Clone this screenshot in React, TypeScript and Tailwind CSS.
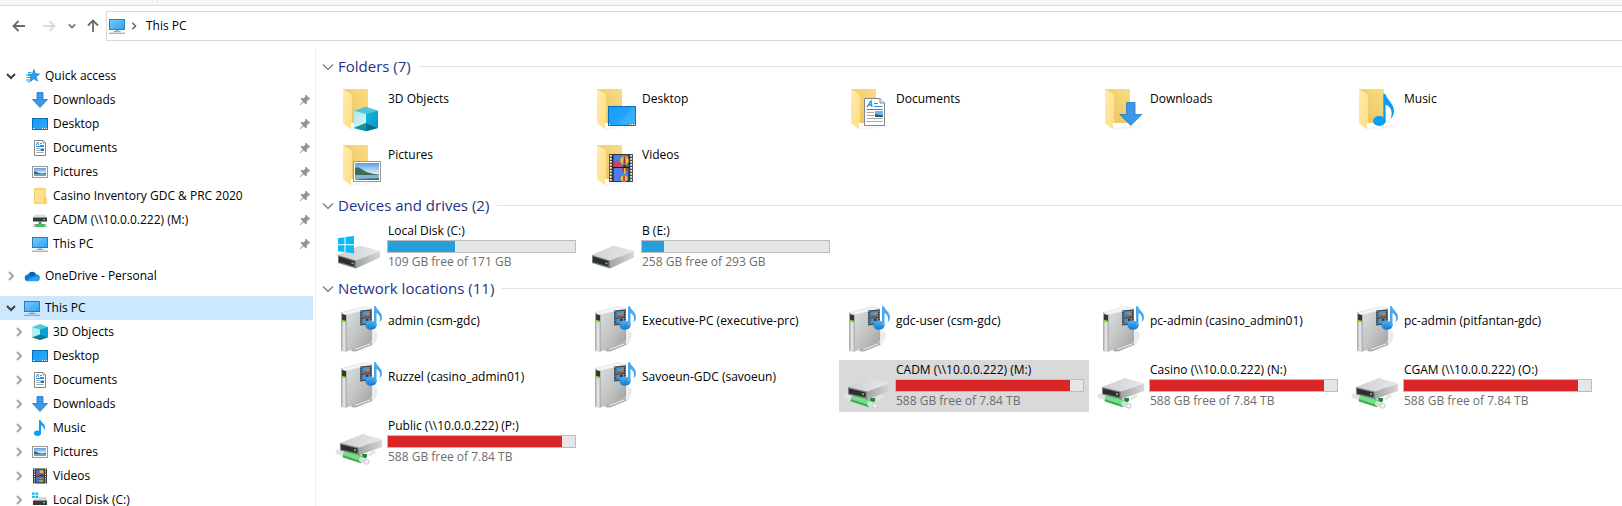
import React, { useState } from "react";

type IconProps = { className?: string };

/* ---------- glyphs ---------- */

function ChevronDown({ className }: IconProps) {
  return (
    <svg viewBox="0 0 10 10" className={className} fill="none" stroke="currentColor" strokeWidth="2">
      <path d="M1 3l4 4 4-4" />
    </svg>
  );
}

function ChevronRight({ className }: IconProps) {
  return (
    <svg viewBox="0 0 10 10" className={className} fill="none" stroke="currentColor" strokeWidth="1.8">
      <path d="M3 1l4 4-4 4" />
    </svg>
  );
}

function GroupChevron({ className }: IconProps) {
  return (
    <svg viewBox="0 0 12 12" className={className} fill="none" stroke="currentColor" strokeWidth="1.1">
      <path d="M1 3.5l5 5 5-5" />
    </svg>
  );
}

function Arrow({ className }: IconProps) {
  return (
    <svg viewBox="0 0 14 14" className={className} fill="none" stroke="currentColor" strokeWidth="1.8">
      <path d="M13 7H1.5M6.5 2l-5 5 5 5" />
    </svg>
  );
}

function Pin({ className }: IconProps) {
  return (
    <svg viewBox="0 0 12 12" className={className} fill="#8c979f">
      <path d="M7 .8L11.2 5l-.9.8-.7-.2-1.8 1.9.1 2-1 1L4.6 8.200 1.200 11.300.7 10.800 3.800 7.400 1.500 5.100l1-1 2 .1L6.400 2.400 6.200 1.600z" />
    </svg>
  );
}

/* ---------- small icons, 16 x 16 ---------- */

function PcIcon({ className }: IconProps) {
  return (
    <svg viewBox="0 0 16 16" className={className}>
      <rect x=".5" y="1.500" width="15" height="10" fill="url(#screen)" stroke="#2a7db5" />
      <path d="M6.500 12h3v1h-3z" fill="#9ab0c0" />
      <path d="M4.500 13h7v.8h-7z" fill="#7f95a5" />
      <path d="M0 14.700h16v1H0z" fill="#7d98b0" />
    </svg>
  );
}

function StarIcon({ className }: IconProps) {
  return (
    <svg viewBox="0 0 16 16" className={className}>
      <path d="M10 1.500l1.400 4.200 4.100.3-3.400 2.700 1.300 4.400-3.600-2.400-3.600 2.900.9-4.600L4 6.400l4.400-.5z" fill="#2aa3ee" stroke="#1272b8" strokeWidth=".7" />
      <path d="M4 4.500h3.500M2 7h4M2.500 9.500H7M2 12h4.500M3.500 14h2" stroke="#1b8fe0" strokeWidth=".9" />
    </svg>
  );
}

function DownloadIcon({ className }: IconProps) {
  return (
    <svg viewBox="0 0 16 16" className={className}>
      <path d="M5 .5h6v7h4.500L8 15.500.5 7.500H5z" fill="#3b97e8" stroke="#2478c4" strokeWidth=".8" />
    </svg>
  );
}

function DesktopIcon({ className }: IconProps) {
  return (
    <svg viewBox="0 0 16 16" className={className}>
      <rect x=".5" y="2.500" width="15" height="11" fill="url(#desk)" stroke="#0d6fb8" />
      <path d="M1 12.500h1.500M10 12.500h1M12 12.500h1M14 12.500h1" stroke="#fff" />
    </svg>
  );
}

function DocumentIcon({ className }: IconProps) {
  return (
    <svg viewBox="0 0 16 16" className={className}>
      <path d="M2.500.5h8.500l2.500 2.500v12.500h-11z" fill="#fff" stroke="#858585" />
      <path d="M11 .5V3h2.500" fill="none" stroke="#858585" strokeWidth=".8" />
      <path d="M4.200 5l1.500-3 1 3M8 3.500h2M8 5.500h4M4 6.500h8" stroke="#1f93dc" fill="none" />
      <path d="M4 8.500h4M4 10.500h4M4 12.500h8" stroke="#8f9aa2" strokeWidth=".8" />
      <path d="M8.500 8.500H12V11H8.500z" fill="#2f78a6" />
    </svg>
  );
}

function PictureIcon({ className }: IconProps) {
  return (
    <svg viewBox="0 0 16 16" className={className}>
      <rect x=".5" y="2.500" width="15" height="11" fill="#fff" stroke="#999" />
      <rect x="2" y="4" width="12" height="8" fill="url(#sky)" />
      <path d="M2 7c3 .6 5 2.500 8 2.500l4-.5v1.200H2z" fill="#3c6b58" />
      <path d="M2 10h12v2H2z" fill="#6aa3c4" />
    </svg>
  );
}

function FolderIcon({ className }: IconProps) {
  return (
    <svg viewBox="0 0 16 16" className={className}>
      <path d="M2.500.5h10.800v9l1.200 1v5h-12z" fill="#ffe08a" stroke="#eac65b" strokeWidth=".8" />
      <path d="M12.500 15V10l1.500-.6" fill="none" stroke="#e3bb4b" strokeWidth=".8" />
    </svg>
  );
}

function NetDriveIcon({ className }: IconProps) {
  return (
    <svg viewBox="0 0 16 16" className={className}>
      <path d="M3 2.500h10l2 3H1z" fill="#dcdee0" />
      <path d="M1 5.500h14v4H1z" fill="#33383b" />
      <path d="M11 7.500h2" stroke="#4ee36b" strokeWidth="1.200" />
      <path d="M6.500 9.500h3v2.500h-3z" fill="#3c9f4c" />
      <path d="M3 12h10v3H3z" fill="#4bb95b" />
      <path d="M1 12.500h2v2H1zM13 12.500h2v2h-2z" fill="#bfc6c2" />
    </svg>
  );
}

function CloudIcon({ className }: IconProps) {
  return (
    <svg viewBox="0 0 16 16" className={className}>
      <path d="M4 7a4.500 4.500 0 018.400-.6L9 10z" fill="#0f5fb5" />
      <path d="M3.600 13.300A3.400 3.400 0 013.500 6.600c1.200-.2 2 .1 2.800.6l4.200 2.600-6.900 3.500z" fill="#1177d4" />
      <path d="M8.800 8.800c1-1.900 2.400-2.600 4-2.300a3.300 3.300 0 013 3l-4.300 1.300z" fill="#1a8ae6" />
      <path d="M1.800 12.700L9 8.700l6.600.4c.7 2.200-.4 4.200-2.600 4.200H3.600c-.7 0-1.300-.2-1.800-.6z" fill="#27a4f0" />
    </svg>
  );
}

function CubeIcon({ className }: IconProps) {
  return (
    <svg viewBox="0 0 16 16" className={className}>
      <path d="M8 0l8 3v10l-8 3-8-3V3z" fill="#52c8dc" />
      <path d="M0 3l8 2.500V11l-8 2.500z" fill="#b5ecf0" />
      <path d="M16 3L8 5.500V11l8 2.500z" fill="#0aa3d2" />
      <path d="M8 10.500l8 3L8 16l-8-2.500z" fill="#087f96" />
    </svg>
  );
}

function MusicIcon({ className }: IconProps) {
  return (
    <svg viewBox="0 0 16 16" className={className} fill="#0f9bf2">
      <ellipse cx="5.500" cy="13.200" rx="3.500" ry="2.700" />
      <path d="M7 0h1.500c.4 2.500 4.500 3.500 4.500 7.500 0 1.400-.4 2.400-1 3.300.3-3.600-1.500-4.800-3-5.600v8H7z" />
    </svg>
  );
}

function VideoIcon({ className }: IconProps) {
  return (
    <svg viewBox="0 0 16 16" className={className}>
      <path d="M1 .5h14v15H1z" fill="#2e2e2e" />
      <path d="M2.500 1v15M13.500 1v15" stroke="#e8e8e8" strokeWidth="1.200" strokeDasharray="1.300 1" />
      <path d="M4 1.500h8v6H4zM4 8.500h8v6H4z" fill="#3d74cf" />
      <path d="M4 6h4l-1 1.500H4z" fill="#cf3c5a" />
      <circle cx="9.500" cy="4" r="2" fill="#edb623" />
      <path d="M8.500 5.500h2V8h-2z" fill="#6a2d1b" />
      <circle cx="9" cy="12" r="2" fill="#d9a221" />
      <path d="M7 11h4v1H7z" fill="#c22b33" />
    </svg>
  );
}

function DiskIcon({ className }: IconProps) {
  return (
    <svg viewBox="0 0 16 16" className={className}>
      <path d="M0 .5h2.700v2.300H0zM3.500.5h2.700v2.300H3.500zM0 3.800h2.700v2.300H0zM3.500 3.800h2.700v2.300H3.500z" fill="#12b5ee" />
      <path d="M7 5h6.500L15 8.500H1l1.500-1.700H7z" fill="#d3d5d7" />
      <path d="M1 8.500h14V13H1z" fill="#35393b" />
      <path d="M11 10.700h2" stroke="#4ee36b" strokeWidth="1.200" />
    </svg>
  );
}

/* ---------- large icons, 48 x 48 ---------- */

function LargeFolder({ children }: { children: React.ReactNode }) {
  return (
    <svg viewBox="0 0 48 48" className="size-12">
      <path d="M17 44.500l5-1.500 25-2-3 2-26 3z" fill="#000" opacity=".04" />
      <path d="M8 5h25v34H12z" fill="url(#folderBack)" />
      <path d="M8 5l7.500 4.600c1 .6 1.500 1.400 1.500 2.600v27h-1.500l1 6.300L8 39.500z" fill="url(#folderFront)" />
      {children}
    </svg>
  );
}

function Folder3D() {
  return (
    <LargeFolder>
      <path d="M31 22.700l12 4v17.300l-12 3.200-12-3.200V26.700z" fill="#4cc5d8" />
      <path d="M19 26.700L31 30v9l-12 4.500z" fill="url(#cubeLeft)" />
      <path d="M43 26.700L31 30v9l12 4.500z" fill="url(#cubeRight)" />
      <path d="M31 39v8.200L19 44z" fill="#0d94a8" />
      <path d="M31 39v8.200L43 44z" fill="#066f8f" />
    </LargeFolder>
  );
}

function FolderDesktop() {
  return (
    <LargeFolder>
      <rect x="19.500" y="22.500" width="27" height="19" fill="url(#desk)" stroke="#0d6fb8" />
      <path d="M20 40.500h1M41 40.500h1M43 40.500h1M45 40.500h1" stroke="#fff" />
      <path d="M29 40L44 23h2.500v17z" fill="#fff" opacity=".09" />
    </LargeFolder>
  );
}

function FolderDocuments() {
  return (
    <LargeFolder>
      <path d="M21.500 14.500h15.500l4.500 4.500v22.500h-20z" fill="#fff" stroke="#858585" />
      <path d="M37 14.500V19h4.500" fill="#eee" stroke="#858585" />
      <path d="M24 23l4-6 1 6M25.500 21h3.500" fill="none" stroke="#1f93dc" strokeWidth="1.300" />
      <path d="M31 19.500h4M31 22.500h8.500M23.500 25.500h16" stroke="#1f93dc" />
      <path d="M23.500 28.500h7.500M23.500 31.500h7.500M23.500 34.500h16M23.500 37.500h16" stroke="#a9a9b2" />
      <path d="M32 27h8v6h-8z" fill="#74b3ea" />
      <path d="M32 30l8 1.500V33h-8z" fill="#2b5d6e" />
    </LargeFolder>
  );
}

function FolderDownloads() {
  return (
    <LargeFolder>
      <path d="M29.500 18.500h8.500v12h6.800L33.800 41.500 22.800 30.500h6.700z" fill="#3b97e8" stroke="#2478c4" strokeWidth=".8" />
    </LargeFolder>
  );
}

function FolderMusic() {
  return (
    <LargeFolder>
      <ellipse cx="28.300" cy="37" rx="6.300" ry="5" fill="#0a9df5" />
      <path d="M32.300 10h2.200c1 5.500 8.500 9.500 8.500 17 0 2.800-1 5-2.400 7.200l-.6-.7c2-6-.5-11-5.400-13V38h-2.300z" fill="#0a9df5" />
    </LargeFolder>
  );
}

function FolderPictures() {
  return (
    <LargeFolder>
      <rect x="18.500" y="21.500" width="27" height="20" fill="#fff" stroke="#999" />
      <rect x="20" y="23" width="24" height="17" fill="url(#sky)" />
      <path d="M20 28c3-2 6 1 9 2.500 3 2 8 3.500 15 4v.8H20z" fill="#3d6d5c" />
      <path d="M20 35h24v5H20z" fill="#7fb5d6" />
      <path d="M20 40c6-1.500 12-1.500 24-2v2z" fill="#3f735c" />
    </LargeFolder>
  );
}

function FolderVideos() {
  return (
    <LargeFolder>
      <path d="M20 14h24v28H20z" fill="#4a4a4a" />
      <path d="M21.800 15v27M42.200 15v27" stroke="#f2f2f2" strokeWidth="1.800" strokeDasharray="1.700 1.300" />
      <path d="M23.500 14.500h17v27h-17z" fill="#1c1c1c" />
      <path d="M24.500 15h15v12h-15zM24.500 28h15v13h-15z" fill="#4b7fe0" />
      <path d="M24.500 22l3-1.500 4 3 2 3.500h-9z" fill="#d8405f" />
      <path d="M34 25h5.500v2H34z" fill="#2e8b4f" />
      <circle cx="35.500" cy="20.500" r="4.200" fill="#f4c12c" />
      <path d="M34.700 16.500h1.600l.4 8h-2.400z" fill="#b8282f" />
      <path d="M34.500 25h2v2h-2z" fill="#3d2412" />
      <path d="M32.500 28h6.500l-2.300 4.500h-2z" fill="#c9352e" />
      <path d="M35 28h1.500v6H35z" fill="#f4c12c" />
      <circle cx="35" cy="38.500" r="3.300" fill="#f4c12c" />
      <path d="M34.300 35.500h1.500V41h-1.500z" fill="#b8282f" />
    </LargeFolder>
  );
}

function DiskShape() {
  return (
    <>
      <path d="M3 32l20.500-9c1-.4 2-.4 3 0L45 28 21 37.500z" fill="url(#metal)" />
      <path d="M45 28v6.500L21 45.500v-8z" fill="url(#metalSide)" />
      <path d="M3 32l18 5.500v8L3 40z" fill="#77797b" />
      <path d="M4 33.600l15.300 4.600v5.400L4 39z" fill="#2b2d2e" />
      <path d="M16.500 39.200l2 .6v1.600l-2-.6z" fill="#3bf04c" />
    </>
  );
}

function LocalDisk() {
  return (
    <svg viewBox="0 0 48 48" className="size-12">
      <DiskShape />
      <path d="M3 15.200l6.500-.9v6.900H3zM10.500 14.100L19 13v8.200h-8.500zM3 22.200h6.500v6.900L3 28.200zM10.500 22.200H19v8.200l-8.500-1.200z" fill="#0bbcf2" />
    </svg>
  );
}

function Disk() {
  return (
    <svg viewBox="0 0 48 48" className="size-12">
      <DiskShape />
    </svg>
  );
}

function NetworkDisk() {
  return (
    <svg viewBox="0 0 48 48" className="size-12">
      <path d="M27 36h5v3l-4 3z" fill="#23823a" />
      <path d="M37 33l3-.5.500 2.500-5 3-3-1z" fill="#e3e5e6" />
      <path d="M3 33.800l6 2" stroke="#dfe3e4" strokeWidth="5" strokeLinecap="round" />
      <path d="M8.500 35.800l18.500 6" stroke="#3cab52" strokeWidth="7.500" />
      <path d="M8.700 35l18.500 6" stroke="#74e087" strokeWidth="4.500" />
      <path d="M27 41.800l4.500 1.700" stroke="#dadddd" strokeWidth="5.600" strokeLinecap="round" />
      <circle cx="31.800" cy="43.800" r="2.300" fill="#f5f6f6" stroke="#b9bebf" strokeWidth=".7" />
      <path d="M5 25l21.500-8.600c1-.4 2-.4 3 0L47 21.500 24 29.500z" fill="url(#metal)" />
      <path d="M47 21.500V29L24 37.200v-7.700z" fill="url(#metalSide)" />
      <path d="M5 25l19 4.500v7.700L5 32.500z" fill="#808284" />
      <path d="M6 26.500l16.500 4v4.800L6 31.400z" fill="#2b2d2e" />
      <path d="M19 31.100l2 .5v1.700l-2-.5z" fill="#3bf04c" />
    </svg>
  );
}

function MediaServer() {
  return (
    <svg viewBox="0 0 48 48" className="size-12">
      <path d="M16 46l22-7c3-3 5-8 5-12l-6-3z" fill="#000" opacity=".08" />
      <path d="M18 42l18-6.500 1.500 3.300L21 45.500l-5-.5z" fill="#a9aaab" />
      <path d="M20 43.500l15.500-5.700" stroke="#eee" strokeWidth="1.200" />
      <path d="M6 6.500L29 .5l8 2L12 9z" fill="#f3f4f5" stroke="#d8d9db" strokeWidth=".5" />
      <path d="M12 8.700L37 2.500V35L12 45.500z" fill="url(#tower)" />
      <path d="M6 6.500l6 2.200v36.800c-2.500.6-4.500.3-6-1z" fill="url(#towerFront)" />
      <path d="M7 8l4 1.300v6.500l-4-1z" fill="#333637" />
      <path d="M7 13.800l4 1v1.700l-4-1z" fill="#7be500" />
      <path d="M25 4.500L37 3.500V18l-12 1.500z" fill="#3b4148" />
      <path d="M26 5v14M36.300 4.500v13" stroke="#a9b3bc" strokeWidth="1" strokeDasharray="1.200 1.200" />
      <path d="M27.300 5.500l7.700-.7v6.200l-7.700.8zM27.300 12.800l7.700-.8v5l-7.700.9z" fill="#3f97d4" />
      <path d="M28 9.800l3.500-.8 3-1.500V11l-6.500.6z" fill="#a8503a" />
      <circle cx="32.500" cy="8" r="1.500" fill="#cf8626" />
      <path d="M31 12.800h2.500v2H31z" fill="#4f2620" />
      <ellipse cx="36" cy="19.300" rx="5.600" ry="4.500" fill="url(#note)" />
      <path d="M39 .3h2c.8 4 6 5.700 6 10.700 0 2-.7 3.500-1.700 4.700l-.6-.4c1.300-4-.6-7-3.200-8.300v12.500H39z" fill="#49a9ec" />
    </svg>
  );
}

function Gradients() {
  return (
    <svg className="absolute size-0" aria-hidden="true">
      <defs>
        <linearGradient id="screen" x1="0" y1="0" x2="1" y2="1">
          <stop offset="0" stopColor="#7ccbfb" />
          <stop offset="1" stopColor="#2ba2f5" />
        </linearGradient>
        <linearGradient id="desk" x1="0" y1="0" x2="1" y2="1">
          <stop offset="0" stopColor="#149cf8" />
          <stop offset="1" stopColor="#30a8fd" />
        </linearGradient>
        <linearGradient id="sky" x1="0" y1="0" x2="0" y2="1">
          <stop offset="0" stopColor="#5b9be4" />
          <stop offset=".6" stopColor="#d9ecf6" />
        </linearGradient>
        <linearGradient id="folderBack" x1="0" y1="1" x2="1" y2="0">
          <stop offset="0" stopColor="#e9c25c" />
          <stop offset="1" stopColor="#f9dc83" />
        </linearGradient>
        <linearGradient id="folderFront" x1="0" y1="0" x2="1" y2="1">
          <stop offset="0" stopColor="#ffecac" />
          <stop offset="1" stopColor="#ffdd86" />
        </linearGradient>
        <linearGradient id="cubeLeft" x1="0" y1="0" x2="1" y2="1">
          <stop offset="0" stopColor="#a9e6ec" />
          <stop offset="1" stopColor="#dff7f8" />
        </linearGradient>
        <linearGradient id="cubeRight" x1="0" y1="0" x2="1" y2="1">
          <stop offset="0" stopColor="#10bcd4" />
          <stop offset="1" stopColor="#0b8fd8" />
        </linearGradient>
        <linearGradient id="metal" x1="0" y1="0" x2="1" y2="0">
          <stop offset="0" stopColor="#cfd0d2" />
          <stop offset="1" stopColor="#e6e7ea" />
        </linearGradient>
        <linearGradient id="metalSide" x1="0" y1="0" x2="1" y2="0">
          <stop offset="0" stopColor="#a2a3a6" />
          <stop offset="1" stopColor="#d6d7d9" />
        </linearGradient>
        <linearGradient id="tower" x1="0" y1="0" x2="1" y2="1">
          <stop offset="0" stopColor="#dcdddd" />
          <stop offset=".55" stopColor="#bfc0c0" />
          <stop offset="1" stopColor="#9d9e9e" />
        </linearGradient>
        <linearGradient id="towerFront" x1="0" y1="0" x2="1" y2="0">
          <stop offset="0" stopColor="#9fa0a3" />
          <stop offset=".5" stopColor="#ecedf1" />
          <stop offset="1" stopColor="#a6a7ab" />
        </linearGradient>
        <linearGradient id="note" x1="0" y1="0" x2="0" y2="1">
          <stop offset="0" stopColor="#4fb2f2" />
          <stop offset="1" stopColor="#1178cf" />
        </linearGradient>
      </defs>
    </svg>
  );
}

/* ---------- navigation pane ---------- */

type NavEntry = { label: string; icon: React.ComponentType<IconProps> };

const quickAccess: NavEntry[] = [
  { label: "Downloads", icon: DownloadIcon },
  { label: "Desktop", icon: DesktopIcon },
  { label: "Documents", icon: DocumentIcon },
  { label: "Pictures", icon: PictureIcon },
  { label: "Casino Inventory GDC & PRC 2020", icon: FolderIcon },
  { label: "CADM (\\\\10.0.0.222) (M:)", icon: NetDriveIcon },
  { label: "This PC", icon: PcIcon },
];

const thisPc: NavEntry[] = [
  { label: "3D Objects", icon: CubeIcon },
  { label: "Desktop", icon: DesktopIcon },
  { label: "Documents", icon: DocumentIcon },
  { label: "Downloads", icon: DownloadIcon },
  { label: "Music", icon: MusicIcon },
  { label: "Pictures", icon: PictureIcon },
  { label: "Videos", icon: VideoIcon },
  { label: "Local Disk (C:)", icon: DiskIcon },
];

function RootRow({ label, icon: Icon, open, current }: NavEntry & { open?: boolean; current?: boolean }) {
  return (
    <div className={current ? "flex h-6 items-center bg-[#cce8ff] pl-1.5" : "flex h-6 items-center pl-1.5"}>
      <button type="button" aria-label={`Toggle ${label}`} className="mr-2 flex size-2.5">
        {open ? <ChevronDown className="size-2.5 text-[#404040]" /> : <ChevronRight className="size-2.5 text-[#a0a0a0]" />}
      </button>
      <a href="#" className="flex flex-1 items-center gap-[5px]">
        <Icon className="size-4" />
        {label}
      </a>
    </div>
  );
}

function ChildRow({ label, icon: Icon, pinned }: NavEntry & { pinned?: boolean }) {
  return (
    <li className="flex h-6 items-center pr-0.5 pl-3.5">
      {pinned ? (
        <span className="mr-2 size-2.5" />
      ) : (
        <button type="button" aria-label={`Expand ${label}`} className="mr-2 flex size-2.5">
          <ChevronRight className="size-2.5 text-[#a0a0a0]" />
        </button>
      )}
      <a href="#" className="flex flex-1 items-center gap-[5px]">
        <Icon className="size-4" />
        {label}
      </a>
      {pinned && <Pin className="size-3" />}
    </li>
  );
}

/* ---------- content pane ---------- */

function Group({ title, count, children }: { title: string; count: number; children: React.ReactNode }) {
  const [open, setOpen] = useState(true);
  return (
    <section>
      <h2 className="flex h-[31px] items-center gap-2 pl-1.5 text-[15px] text-[#1e3287]">
        <button type="button" aria-expanded={open} onClick={() => setOpen(!open)} className="flex items-center gap-1">
          <GroupChevron className="size-3 text-[#707070]" />
          {title} ({count})
        </button>
        <span className="h-px flex-1 bg-[#e2e2e2]" />
      </h2>
      {open && <ul className="grid grid-cols-[repeat(auto-fill,250px)] gap-1 pl-[15px]">{children}</ul>}
    </section>
  );
}

function PlainTile({ label, icon }: { label: string; icon: React.ReactNode }) {
  return (
    <li>
      <a href="#" className="flex h-[52px] gap-[5px] pt-0.5 pl-1">
        {icon}
        <span className="pt-1.5 leading-[18px]">{label}</span>
      </a>
    </li>
  );
}

type DriveProps = { label: string; free: string; used: number; full?: boolean; selected?: boolean; icon: React.ReactNode };

function DriveTile({ label, free, used, full, selected, icon }: DriveProps) {
  return (
    <li className={selected ? "bg-[#d9d9d9]" : ""}>
      <a href="#" className="flex h-[52px] gap-1 pt-0.5 pr-[5px] pl-1">
        {icon}
        <span className="flex flex-1 flex-col">
          <span className="mb-0.5 pl-px leading-[15px]">{label}</span>
          <span
            role="meter"
            aria-label={`${label} used space`}
            aria-valuenow={used}
            className="flex h-[13px] border border-[#bcbcbc] bg-[#e6e6e6]"
          >
            <span className={full ? "bg-[#da2626]" : "bg-[#26a0da]"} style={{ width: `${used}%` }} />
          </span>
          <span className="pl-px leading-[18px] text-[#6d6d6d]">{free}</span>
        </span>
      </a>
    </li>
  );
}

const folders = [
  { label: "3D Objects", icon: <Folder3D /> },
  { label: "Desktop", icon: <FolderDesktop /> },
  { label: "Documents", icon: <FolderDocuments /> },
  { label: "Downloads", icon: <FolderDownloads /> },
  { label: "Music", icon: <FolderMusic /> },
  { label: "Pictures", icon: <FolderPictures /> },
  { label: "Videos", icon: <FolderVideos /> },
];

const servers = [
  "admin (csm-gdc)",
  "Executive-PC (executive-prc)",
  "gdc-user (csm-gdc)",
  "pc-admin (casino_admin01)",
  "pc-admin (pitfantan-gdc)",
  "Ruzzel (casino_admin01)",
  "Savoeun-GDC (savoeun)",
];

const shares = [
  "CADM (\\\\10.0.0.222) (M:)",
  "Casino (\\\\10.0.0.222) (N:)",
  "CGAM (\\\\10.0.0.222) (O:)",
  "Public (\\\\10.0.0.222) (P:)",
];

export default function App() {
  return (
    <div className="flex h-screen flex-col overflow-hidden bg-white font-['Open_Sans','Noto_Sans',sans-serif] text-[12px] text-black">
      <Gradients />
      <div className="h-1.5 shrink-0 border-b border-[#dadbdc] bg-[#f5f6f7]">
        <div className="ml-[157px] h-0.5 w-px bg-[#dadbdc]" />
      </div>

      <header className="flex shrink-0 items-center pt-[5px] pl-3">
        <button type="button" aria-label="Back" className="mr-4">
          <Arrow className="size-3.5 text-[#6a6a6a]" />
        </button>
        <button type="button" aria-label="Forward" disabled className="mr-3">
          <Arrow className="size-3.5 rotate-180 text-[#dadada]" />
        </button>
        <button type="button" aria-label="Recent locations" className="mr-2.5">
          <ChevronDown className="size-2 text-[#707070]" />
        </button>
        <button type="button" aria-label="Up" className="mr-1.5">
          <Arrow className="size-3.5 rotate-90 text-[#6a6a6a]" />
        </button>
        <nav aria-label="Address" className="flex h-[30px] flex-1 items-center border border-r-0 border-[#d9d9d9] pl-0.5">
          <PcIcon className="size-4" />
          <ChevronRight className="mr-2 ml-[5px] size-2 text-[#606060]" />
          <a href="#">This PC</a>
        </nav>
      </header>

      <div className="flex min-h-0 flex-1 pt-[7px]">
        <nav aria-label="Folders" className="w-[316px] shrink-0 overflow-hidden border-r border-[#f0f0f0] pt-4 pr-0.5">
          <RootRow label="Quick access" icon={StarIcon} open />
          <ul className="mb-2">
            {quickAccess.map((item) => (
              <ChildRow key={item.label} {...item} pinned />
            ))}
          </ul>
          <div className="mb-2">
            <RootRow label="OneDrive - Personal" icon={CloudIcon} />
          </div>
          <RootRow label="This PC" icon={PcIcon} open current />
          <ul>
            {thisPc.map((item) => (
              <ChildRow key={item.label} {...item} />
            ))}
          </ul>
        </nav>

        <main className="min-w-0 flex-1 overflow-hidden pt-[3px]">
          <Group title="Folders" count={7}>
            {folders.map((item) => (
              <PlainTile key={item.label} {...item} />
            ))}
          </Group>
          <Group title="Devices and drives" count={2}>
            <DriveTile label="Local Disk (C:)" free="109 GB free of 171 GB" used={36} icon={<LocalDisk />} />
            <DriveTile label="B (E:)" free="258 GB free of 293 GB" used={12} icon={<Disk />} />
          </Group>
          <Group title="Network locations" count={11}>
            {servers.map((label) => (
              <PlainTile key={label} label={label} icon={<MediaServer />} />
            ))}
            {shares.map((label, i) => (
              <DriveTile key={label} label={label} free="588 GB free of 7.84 TB" used={93} full selected={i === 0} icon={<NetworkDisk />} />
            ))}
          </Group>
        </main>
      </div>
    </div>
  );
}
